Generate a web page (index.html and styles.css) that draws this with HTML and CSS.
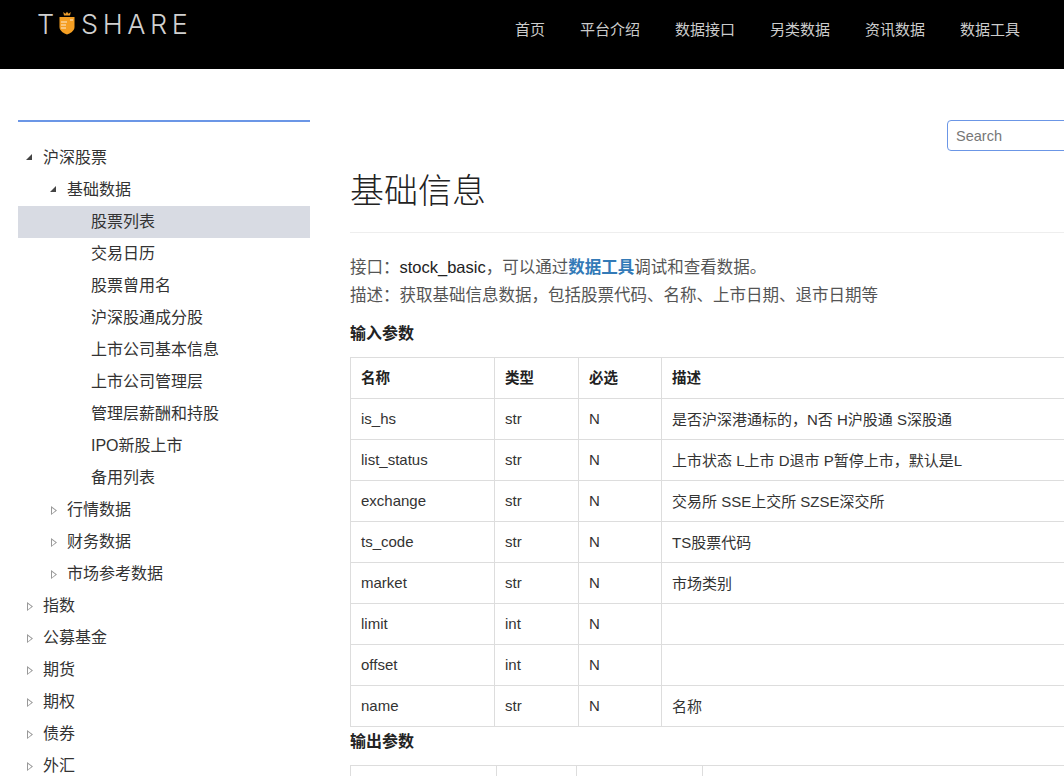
FILE: index.html
```html
<!DOCTYPE html>
<html lang="zh">
<head>
<meta charset="utf-8">
<title>基础信息</title>
<link rel="stylesheet" href="styles.css">
</head>
<body>
<header class="topbar">
  <div class="logo">
    <span class="logo-t">T</span>
    <svg class="logo-mark" width="16" height="24" viewBox="0 0 16 24" aria-hidden="true">
      <path d="M5 4.500 L4.200 1 L6.500 2.800 L8 .8 L9.500 2.800 L11.800 1 L11 4.500 Z" fill="#e89a2c"/>
      <path d="M.5 6 H15.500 V16 C15.500 20 11 22.500 8 23.500 C5 22.500 .5 20 .5 16 Z" fill="#f59f23"/>
      <path d="M2 11h6M2 14h5M2 17h5M11 9h3" stroke="#fff" stroke-width="1" opacity=".8"/>
    </svg>
    <span class="logo-rest">SHARE</span>
  </div>
  <nav class="nav">
    <a>首页</a><a>平台介绍</a><a>数据接口</a><a>另类数据</a><a>资讯数据</a><a>数据工具</a>
  </nav>
</header>
<div class="page">
  <aside class="sidebar">
    <ul class="tree">
      <li class="row l1 open">沪深股票</li>
      <li class="row l2 open">基础数据</li>
      <li class="row l3 active">股票列表</li>
      <li class="row l3">交易日历</li>
      <li class="row l3">股票曾用名</li>
      <li class="row l3">沪深股通成分股</li>
      <li class="row l3">上市公司基本信息</li>
      <li class="row l3">上市公司管理层</li>
      <li class="row l3">管理层薪酬和持股</li>
      <li class="row l3">IPO新股上市</li>
      <li class="row l3">备用列表</li>
      <li class="row l2 closed">行情数据</li>
      <li class="row l2 closed">财务数据</li>
      <li class="row l2 closed">市场参考数据</li>
      <li class="row l1 closed">指数</li>
      <li class="row l1 closed">公募基金</li>
      <li class="row l1 closed">期货</li>
      <li class="row l1 closed">期权</li>
      <li class="row l1 closed">债券</li>
      <li class="row l1 closed">外汇</li>
    </ul>
  </aside>
  <main class="content">
    <div class="search-row"><input class="search" type="text" placeholder="Search"></div>
    <h1 class="title">基础信息</h1>
    <p class="line first">接口：<span class="dark">stock_basic</span>，可以通过<a class="tool-link">数据工具</a>调试和查看数据。</p>
    <p class="line">描述：获取基础信息数据，包括股票代码、名称、上市日期、退市日期等</p>
    <h4 class="section">输入参数</h4>
    <table class="params in">
      <colgroup><col class="c1"><col class="c2"><col class="c3"><col></colgroup>
      <thead><tr><th>名称</th><th>类型</th><th>必选</th><th>描述</th></tr></thead>
      <tbody>
        <tr><td>is_hs</td><td>str</td><td>N</td><td>是否沪深港通标的，N否 H沪股通 S深股通</td></tr>
        <tr><td>list_status</td><td>str</td><td>N</td><td>上市状态 L上市 D退市 P暂停上市，默认是L</td></tr>
        <tr><td>exchange</td><td>str</td><td>N</td><td>交易所 SSE上交所 SZSE深交所</td></tr>
        <tr><td>ts_code</td><td>str</td><td>N</td><td>TS股票代码</td></tr>
        <tr><td>market</td><td>str</td><td>N</td><td>市场类别</td></tr>
        <tr><td>limit</td><td>int</td><td>N</td><td></td></tr>
        <tr><td>offset</td><td>int</td><td>N</td><td></td></tr>
        <tr><td>name</td><td>str</td><td>N</td><td>名称</td></tr>
      </tbody>
    </table>
    <h4 class="section out">输出参数</h4>
    <table class="params outp">
      <colgroup><col class="d1"><col class="d2"><col class="d3"><col></colgroup>
      <thead><tr><th></th><th></th><th></th><th></th></tr></thead>
    </table>
  </main>
</div>
</body>
</html>
```
FILE: styles.css
```css
* { box-sizing: border-box; }
html, body { height: 776px; overflow: hidden; }
body {
  margin: 0;
  background: #fff;
  color: #333;
  font-family: "Liberation Sans", "Noto Sans CJK SC", sans-serif;
  font-size: 14px;
}
.topbar {
  height: 69px;
  background: #000;
  display: flex;
  justify-content: space-between;
  padding: 0 44px 0 37px;
}
.logo {
  display: flex;
  align-items: flex-start;
  height: 38px;
  padding-top: 11px;
  color: #d0d0d0;
  font-family: "Inter", sans-serif;
  font-weight: 300;
  font-size: 27px;
  line-height: 28px;
}
.logo-t { width: 22px; }
.logo-mark { flex: none; }
.logo-rest { margin-left: 6px; letter-spacing: 4.600px; }
.nav { display: flex; gap: 35px; padding-top: 20px; }
.nav a { color: #ccc; font-size: 15px; line-height: 20px; height: 20px; }
.page { display: flex; align-items: flex-start; width: 1200px; }
.sidebar {
  flex: none;
  width: 292px;
  margin: 51px 0 0 18px;
  border-top: 2px solid #6b96e6;
}
.tree { list-style: none; margin: 0; padding: 20px 0 0; }
.row {
  position: relative;
  height: 32px;
  line-height: 31px;
  font-size: 16px;
  color: #333;
}
.l1 { padding-left: 25px; }
.l2 { padding-left: 49px; }
.l3 { padding-left: 73px; }
.active { background: #d8dbe3; }
.open::before, .closed::before {
  content: "";
  position: absolute;
}
.l1::before { left: 8px; }
.l2::before { left: 32px; }
.open::before {
  top: 12px;
  width: 0;
  height: 0;
  border-style: solid;
  border-width: 0 0 6px 6px;
  border-color: transparent transparent #444 transparent;
}
.closed::before {
  top: 12px;
  margin-left: 1px;
  width: 6px;
  height: 9px;
  background: #999;
  clip-path: polygon(0 0, 100% 50%, 0 100%, 0 0, 1px 2px, 1px 7.500px, 4.500px 4.500px, 1px 2px);
}
.content { flex: none; width: 780px; margin-left: 40px; padding-top: 51px; }
.search-row { display: flex; justify-content: flex-end; }
.search {
  width: 183px;
  height: 31px;
  padding: 0 8px;
  border: 1px solid #6b96e6;
  border-radius: 4px;
  font: 14.500px "Liberation Sans", sans-serif;
  color: #555;
  outline: none;
}
.search::placeholder { color: #777; opacity: 1; }
.title {
  margin: 18px 0 20px;
  padding-bottom: 19px;
  border-bottom: 1px solid #eee;
  font-size: 34px;
  font-weight: 300;
  line-height: 44px;
  color: #222;
}
.line { margin: 0; font-size: 16.500px; line-height: 28px; color: #555; }
.dark { color: #222; }
.tool-link { color: #337ab7; font-weight: 700; }
.section {
  margin: 13px 0 11px;
  font-size: 16px;
  font-weight: 700;
  line-height: 24px;
  color: #222;
}
.section.out { margin: 3px 0 11px; }
.params { width: 780px; border-collapse: collapse; table-layout: fixed; }
.params th, .params td {
  height: 41px;
  padding: 0 10px 2px;
  border: 1px solid #ddd;
  text-align: left;
  font-size: 15px;
  color: #333;
}
.params th { padding-bottom: 4px; font-size: 14.500px; font-weight: 700; color: #222; }
.c1 { width: 144px; }
.c2 { width: 84px; }
.c3 { width: 83px; }
.d1 { width: 146px; }
.d2 { width: 80px; }
.d3 { width: 126px; }
```
